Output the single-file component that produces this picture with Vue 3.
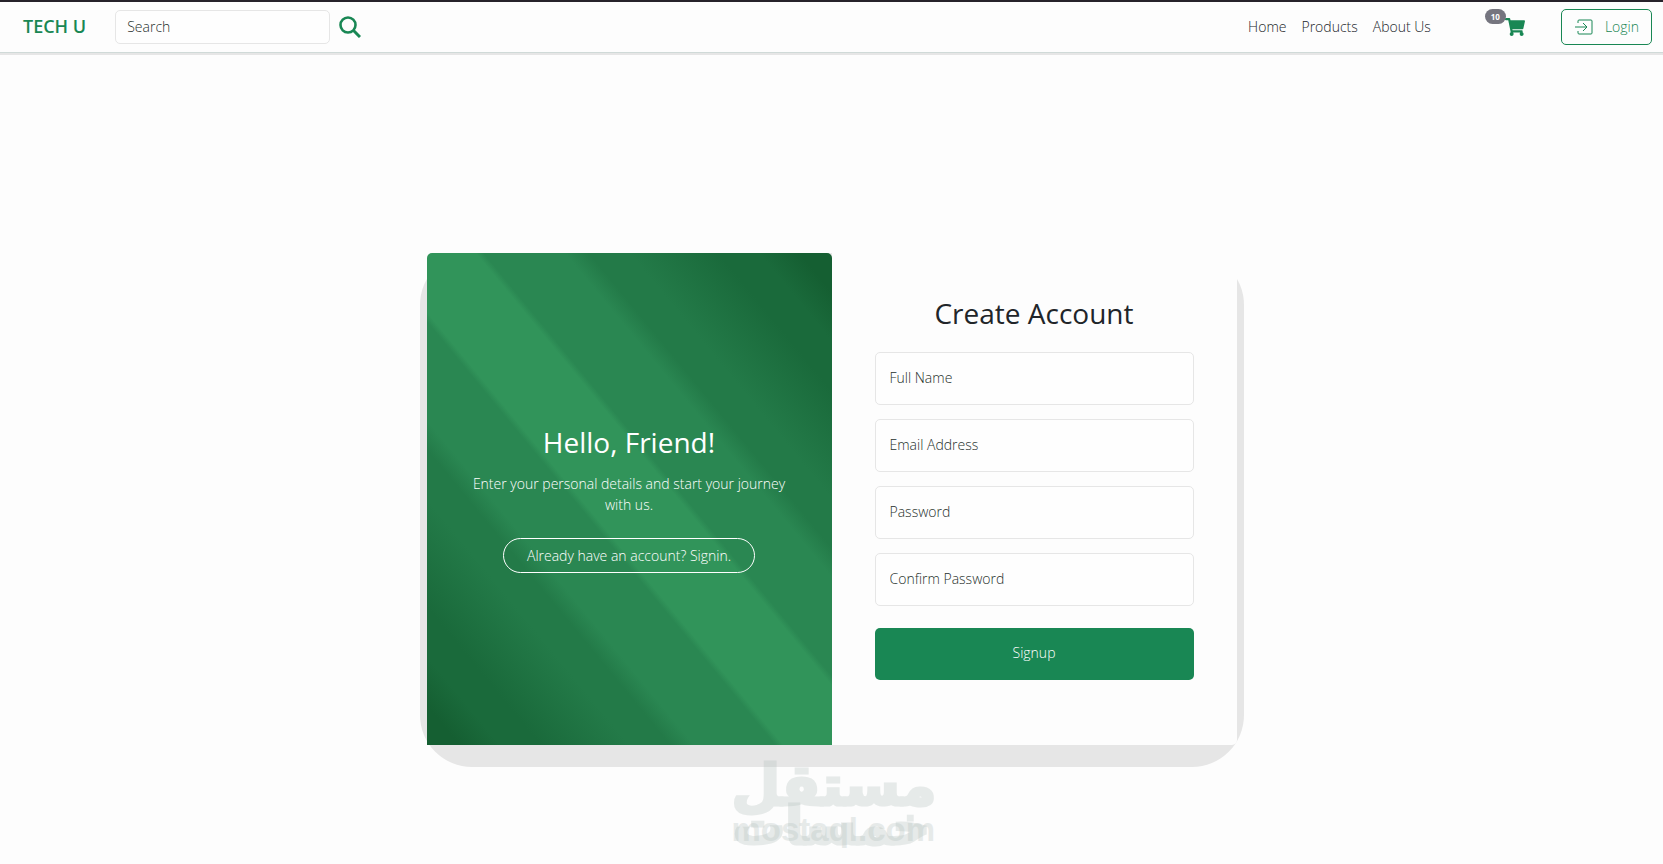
<script setup>
import { ref } from 'vue'

const search = ref('')
const cartCount = ref(10)

const links = ['Home', 'Products', 'About Us']

const fields = ref([
  { id: 'name', label: 'Full Name', type: 'text', value: '' },
  { id: 'email', label: 'Email Address', type: 'email', value: '' },
  { id: 'password', label: 'Password', type: 'password', value: '' },
  { id: 'confirm', label: 'Confirm Password', type: 'password', value: '' }
])
</script>

<template>
  <div class="page">
    <header class="navbar">
      <a class="brand" href="#">TECH U</a>
      <form class="search" @submit.prevent>
        <input v-model="search" type="search" placeholder="Search" aria-label="Search" />
        <button type="submit" aria-label="Submit search">
          <svg viewBox="0 0 22 22" width="22" height="22">
            <circle cx="9" cy="9" r="7.500" fill="none" stroke="currentColor" stroke-width="2.600" />
            <path d="M14 14l7 7" stroke="currentColor" stroke-width="3" />
          </svg>
        </button>
      </form>

      <nav class="links">
        <a v-for="link in links" :key="link" href="#">{{ link }}</a>
      </nav>

      <a class="cart" href="#" aria-label="Cart">
        <svg viewBox="0 0 576 512" width="20" height="18">
          <path
            fill="currentColor"
            d="M528.120 301.319l47.273-208C578.806 78.301 567.391 64 551.990 64H159.208l-9.166-44.810C147.758 8.021 137.930 0 126.529 0H24C10.745 0 0 10.745 0 24v16c0 13.255 10.745 24 24 24h69.883l70.248 343.435C147.325 417.100 136 435.222 136 456c0 30.928 25.072 56 56 56s56-25.072 56-56c0-15.674-6.447-29.835-16.824-40h209.647C430.447 426.165 424 440.326 424 456c0 30.928 25.072 56 56 56s56-25.072 56-56c0-22.172-12.888-41.332-31.579-50.405l5.517-24.276c3.413-15.018-8.002-29.319-23.403-29.319H218.117l-6.545-32h293.145c11.206 0 20.920-7.754 23.403-18.681z"
          />
        </svg>
        <span class="badge">{{ cartCount }}</span>
      </a>

      <button class="login" type="button">
        <svg viewBox="0 0 18 16" width="18" height="16" fill="none" stroke="currentColor">
          <path d="M3 4V2q0-1 1-1h12q1 0 1 1v12q0 1-1 1H4q-1 0-1-1v-2" />
          <path d="M0 8h11.500M8 4l4 4-4 4" />
        </svg>
        <span>Login</span>
      </button>
    </header>

    <main class="content">
      <section class="card">
        <div class="welcome">
          <h2>Hello, Friend!</h2>
          <p>Enter your personal details and start your journey with us.</p>
          <button type="button">Already have an account? Signin.</button>
        </div>

        <form class="signup" @submit.prevent>
          <h2>Create Account</h2>
          <input
            v-for="field in fields"
            :key="field.id"
            v-model="field.value"
            :type="field.type"
            :placeholder="field.label"
            :aria-label="field.label"
          />
          <button type="submit">Signup</button>
        </form>
      </section>
    </main>

    <div class="watermark">
      <span class="mark" lang="ar">مستقل</span>
      <span class="mark second" lang="ar">خمسات</span>
      <span class="domain">mostaql.com</span>
    </div>
  </div>
</template>

<style>
body {
  background-color: #fdfdfd;
}
</style>

<style scoped>
.page {
  position: relative;
  min-height: 100vh;
  box-sizing: border-box;
  border-top: 2px solid #27232b;
  font-family: "Open Sans", "Noto Sans", sans-serif;
  font-size: 14px;
  font-weight: 300;
  line-height: 21px;
  color: #212529;
}

input,
button {
  font: inherit;
  box-sizing: border-box;
}

a {
  color: inherit;
  text-decoration: none;
}

h2 {
  margin: 0;
  font-size: 28px;
  font-weight: 400;
  line-height: 34px;
}

input {
  border: 1px solid #e6e6e6;
  border-radius: 5px;
  background-color: #fefefe;
  outline: none;
}

input::placeholder {
  color: #26302c;
  opacity: 1;
}

button {
  cursor: pointer;
}

.navbar {
  display: flex;
  align-items: center;
  height: 50px;
  padding: 0 11px 0 23px;
  border-bottom: 1px solid #d0dad8;
  box-shadow: 0 2px 0 #e6e6e6;
}

.brand {
  margin-right: 29px;
  padding-bottom: 2px;
  font-size: 18px;
  font-weight: 600;
  color: #198754;
}

.search {
  display: flex;
  align-items: center;
  gap: 9px;
}

.search input {
  width: 215px;
  height: 34px;
  padding: 0 11px 2px;
}

.search button {
  display: flex;
  padding: 0;
  border: 0;
  background: none;
  color: #198754;
}

.links {
  display: flex;
  gap: 15px;
  margin-left: auto;
  padding-bottom: 2px;
}

.cart {
  position: relative;
  display: flex;
  margin: 0 36px 0 74px;
  color: #198754;
}

.badge {
  position: absolute;
  right: 19px;
  bottom: 12px;
  padding: 0 6px;
  border-radius: 8px;
  background-color: #75757f;
  color: #fff;
  font-size: 8px;
  font-weight: 700;
  line-height: 15px;
}

.login {
  display: flex;
  align-items: center;
  gap: 12px;
  height: 36px;
  padding: 0 12px 0 13px;
  border: 1px solid #198754;
  border-radius: 5px;
  background: none;
  color: #198754;
}

.login span {
  padding-bottom: 2px;
}

.content {
  display: flex;
  justify-content: center;
  padding: 200px 16px 0;
}

.card {
  position: relative;
  isolation: isolate;
  display: flex;
  width: 100%;
  max-width: 810px;
}

/* wide soft-cornered shadow that peeks out below the card */
.card::before {
  content: "";
  position: absolute;
  z-index: -1;
  inset: 0 -7px -22px;
  border-radius: 52px;
  background-color: #e6e6e6;
}

.welcome,
.signup {
  width: 50%;
  display: flex;
  flex-direction: column;
  box-sizing: border-box;
}

.welcome {
  align-items: center;
  justify-content: center;
  padding: 0 40px;
  border-radius: 5px 5px 0 0;
  background: linear-gradient(
    to top right,
    #155f32 4%,
    #1a6a3b 9%,
    #1a6a3b 14%,
    #237a48 25%,
    #237a48 30%,
    #2a8752 33%,
    #2a8752 43%,
    #31945a 44%,
    #31945a 56%,
    #2a8752 57%,
    #2a8752 67%,
    #237a48 70%,
    #237a48 75%,
    #1a6a3b 86%,
    #1a6a3b 91%,
    #155f32 96%
  );
  color: #fff;
  text-align: center;
}

.welcome p {
  margin: 14px 0 23px;
}

.welcome button {
  height: 35px;
  padding: 0 23px;
  border: 1px solid #fff;
  border-radius: 18px;
  background: none;
  color: inherit;
}

.signup {
  gap: 14px;
  padding: 43px 43px 65px;
  border-radius: 0 5px 5px 0;
  background-color: #fdfdfd;
}

.signup h2 {
  margin-bottom: 8px;
  text-align: center;
}

.signup input {
  height: 53px;
  padding: 0 14px 2px;
}

.signup button {
  height: 52px;
  margin-top: 8px;
  padding-bottom: 4px;
  border: 0;
  border-radius: 5px;
  background-color: #198754;
  color: #fff;
}

.watermark {
  position: absolute;
  left: 50%;
  bottom: 16px;
  width: 200px;
  height: 92px;
  transform: translateX(-50%);
  pointer-events: none;
  text-align: center;
  white-space: nowrap;
}

.watermark span {
  position: absolute;
  inset: auto 0 0;
  color: #b4c0bd;
  opacity: 0.3;
}

.watermark .mark {
  bottom: 34px;
  font-family: "DejaVu Sans", sans-serif;
  font-size: 56px;
  font-weight: 700;
  line-height: 56px;
  -webkit-text-stroke: 3px #b4c0bd;
}

.watermark .second {
  bottom: -4px;
  font-size: 52px;
  line-height: 52px;
}

.watermark .domain {
  font-family: "Liberation Sans", sans-serif;
  font-size: 33px;
  font-weight: 700;
  line-height: 36px;
}
</style>
